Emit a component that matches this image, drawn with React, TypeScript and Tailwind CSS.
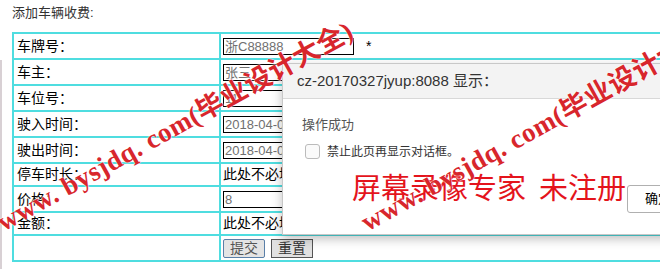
import React from 'react';

const rows = [
    { label: '车牌号：', kind: 'input', value: '浙C88888', star: true },
    { label: '车主：', kind: 'input', value: '张三' },
    { label: '车位号：', kind: 'input', value: '11' },
    { label: '驶入时间：', kind: 'input', value: '2018-04-03 10:00' },
    { label: '驶出时间：', kind: 'input', value: '2018-04-03 12:00' },
    { label: '停车时长：', kind: 'text', value: '此处不必填' },
    { label: '价格：', kind: 'input', value: '8' },
    { label: '金额：', kind: 'text', value: '此处不必填' },
];

const font = 'font-["Liberation_Sans","Noto_Sans_CJK_SC",sans-serif]';

// red screen-recorder watermark, runs diagonally over the page
function Watermark({ className }: { className: string }) {
    return (
        <div
            className={
                'absolute origin-bottom-left -rotate-[29deg] whitespace-nowrap font-["Liberation_Serif","Noto_Sans_CJK_SC",serif] font-bold text-[27px] leading-none tracking-[0.5px] text-[#d8262c] [text-shadow:0_0_2px_#fff,0_0_1px_#fff] ' +
                className
            }
        >
            www. bysjdq. com(毕业设计大全)
        </div>
    );
}

export default function App() {
    return (
        <div className={'relative w-[660px] h-[269px] overflow-hidden bg-white ' + font}>
            <div className="absolute left-0 top-[60px] bottom-0 w-[2px] bg-[#d8d0d4]" />
            <div className="pl-[12px] pt-[4px]">
                <div className="text-[13px] leading-[18px] text-[#333] h-[28px]">添加车辆收费:</div>
                <table className="w-[700px] border-collapse text-[14px] text-black">
                    <tbody>
                        {rows.map((r) => (
                            <tr key={r.label} className={r.kind === 'input' ? 'h-[26px]' : 'h-[21px]'}>
                                <td className="w-[207px] border-2 border-[#4fdde0] px-[3px] py-0 align-middle">{r.label}</td>
                                <td className="border-2 border-[#4fdde0] px-[2px] py-0 align-middle">
                                    {r.kind === 'input' ? (
                                        <div className="flex items-center">
                                            <div className="w-[131px] h-[17px] border border-black pl-[1px] text-[13px] leading-[15px] text-[#707070] overflow-hidden whitespace-nowrap">
                                                {r.value}
                                            </div>
                                            {r.star && <span className="ml-[12px] text-[14px]">*</span>}
                                        </div>
                                    ) : (
                                        <span className="leading-[18px]">{r.value}</span>
                                    )}
                                </td>
                            </tr>
                        ))}
                        <tr className="h-[26px]">
                            <td className="border-2 border-[#4fdde0]" />
                            <td className="border-2 border-[#4fdde0] px-[2px] py-0">
                                <div className="flex gap-[6px]">
                                    <button className="h-[19px] px-[6px] text-[14px] leading-[16px] bg-[#e4e4e4] text-[#555] border border-[#5a7fa8] rounded-[2px]">提交</button>
                                    <button className="h-[19px] px-[6px] text-[14px] leading-[16px] bg-[#e1e1e1] text-[#333] border border-[#555]">重置</button>
                                </div>
                            </td>
                        </tr>
                    </tbody>
                </table>
            </div>

            {/* alert dialog */}
            <div className="absolute left-[282px] top-[63px] w-[420px] h-[172px] bg-white border border-[#c8c8c8] shadow-[0_4px_10px_rgba(0,0,0,0.25)]">
                <div className="h-[35px] bg-[#f3f3f3] border-b border-[#d8d8d8] pl-[14px] flex items-center text-[15px] text-[#333]">
                    cz-20170327jyup:8088 显示：
                </div>
                <div className="pl-[19px] pt-[16px] text-[13px] text-[#555]">操作成功</div>
                <div className="pl-[22px] pt-[8px] flex items-center gap-[7px] text-[12px] text-[#333]">
                    <div className="w-[15px] h-[15px] rounded-[3px] border border-[#bbb] bg-[#fafafa]" />
                    禁止此页再显示对话框。
                </div>
                <div className="absolute left-[344px] top-[121px] w-[80px] h-[28px] border border-[#b0b0b0] rounded-[3px] bg-white pl-[17px] text-[13px] leading-[26px] text-black">
                    确定
                </div>
            </div>

            <div className="absolute left-[352px] top-[172px] whitespace-nowrap text-[29px] leading-none text-[#e4141c] font-['Noto_Sans_CJK_SC',serif] [text-shadow:0_0_1px_#fff]">
                屏幕录像专家&nbsp;&nbsp;未注册
            </div>

            <Watermark className="left-[6px] top-[209px]" />
            <Watermark className="left-[370px] top-[209px]" />
        </div>
    );
}
